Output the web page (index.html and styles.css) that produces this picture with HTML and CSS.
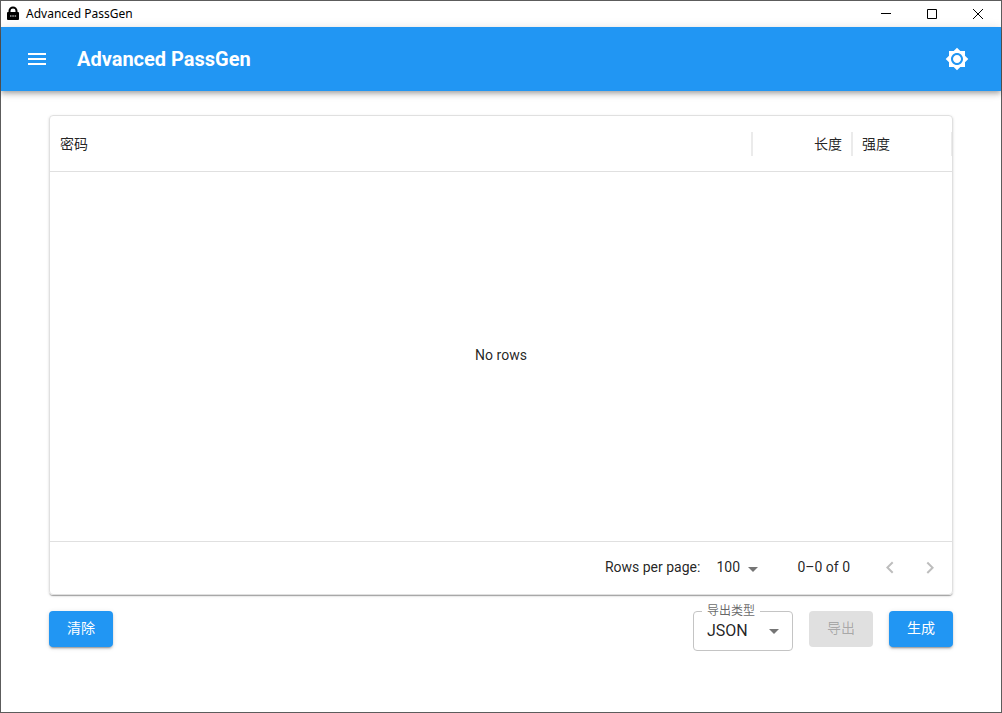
FILE: index.html
```
<!DOCTYPE html>
<html lang="zh-CN">
<head>
  <meta charset="UTF-8">
  <meta name="viewport" content="width=device-width, initial-scale=1.0">
  <title>Advanced PassGen</title>
  <link rel="stylesheet" href="styles.css">
</head>
<body>
  <div class="window">
    <!-- Title bar -->
    <div class="title-bar">
      <svg class="title-icon" viewBox="0 0 16 16" aria-hidden="true">
        <path d="M4.500 7V4.800a3.500 3.300 0 0 1 7 0V7" fill="none" stroke="#000" stroke-width="2"/>
        <rect x="2" y="6" width="12" height="8" rx="1" fill="#000"/>
        <path d="M5 10h1.500M7.300 10h1.500M9.600 10h1.500" stroke="#fff" stroke-width="1"/>
      </svg>
      <span class="title-text">Advanced PassGen</span>
      <div class="window-controls">
        <button type="button" aria-label="Minimize">
          <svg viewBox="0 0 10 10"><path d="M0 4.500h10"/></svg>
        </button>
        <button type="button" aria-label="Maximize">
          <svg viewBox="0 0 10 10"><path d="M.5.5h9v9h-9z"/></svg>
        </button>
        <button type="button" aria-label="Close">
          <svg viewBox="0 0 10 10"><path d="M0 0l10 10M10 0L0 10"/></svg>
        </button>
      </div>
    </div>

    <!-- App bar -->
    <header class="app-bar">
      <button class="icon-button menu" type="button" aria-label="Menu">
        <svg viewBox="0 0 24 24"><path d="M3 18h18v-2H3v2zm0-5h18v-2H3v2zm0-7v2h18V6H3z"/></svg>
      </button>
      <h1>Advanced PassGen</h1>
      <button class="icon-button" type="button" aria-label="Theme">
        <svg viewBox="0 0 24 24"><path d="M20 8.690V4h-4.690L12 .69 8.690 4H4v4.690L.69 12 4 15.310V20h4.690L12 23.310 15.310 20H20v-4.690L23.310 12 20 8.690zM12 18c-3.310 0-6-2.690-6-6s2.690-6 6-6 6 2.690 6 6-2.690 6-6 6zm0-10c-2.210 0-4 1.790-4 4s1.790 4 4 4 4-1.790 4-4-1.790-4-4-4z"/></svg>
      </button>
    </header>

    <main>
      <!-- Password table -->
      <section class="grid">
        <table>
          <thead>
            <tr>
              <th>密码</th>
              <th class="length">长度</th>
              <th class="strength">强度</th>
            </tr>
          </thead>
          <tbody>
            <tr>
              <td colspan="3">No rows</td>
            </tr>
          </tbody>
        </table>
        <div class="pagination">
          <label for="page-size">Rows per page:</label>
          <div class="page-size">
            <select id="page-size">
              <option>100</option>
            </select>
            <svg class="arrow" viewBox="0 0 24 24"><path d="M7 10l5 5 5-5z"/></svg>
          </div>
          <span class="range">0–0 of 0</span>
          <button class="page-button" type="button" aria-label="Previous page" disabled>
            <svg viewBox="0 0 24 24"><path d="M15.410 16.090l-4.580-4.590 4.580-4.590L14 5.500l-6 6 6 6z"/></svg>
          </button>
          <button class="page-button" type="button" aria-label="Next page" disabled>
            <svg viewBox="0 0 24 24"><path d="M8.590 16.340l4.580-4.590-4.580-4.590L10 5.750l6 6-6 6z"/></svg>
          </button>
        </div>
      </section>

      <!-- Actions -->
      <div class="actions">
        <button class="button" type="button">清除</button>
        <div class="export-type">
          <label for="export-type">导出类型</label>
          <select id="export-type">
            <option>JSON</option>
          </select>
          <svg class="arrow" viewBox="0 0 24 24"><path d="M7 10l5 5 5-5z"/></svg>
        </div>
        <button class="button" type="button" disabled>导出</button>
        <button class="button" type="button">生成</button>
      </div>
    </main>
  </div>
</body>
</html>
```
FILE: styles.css
```
* {
  box-sizing: border-box;
}
body {
  margin: 0;
  background-color: #fff;
  color: rgba(0, 0, 0, 0.87);
  font-family: Roboto, "Noto Sans CJK SC", sans-serif;
  font-size: 14px;
  line-height: 20px;
}
button,
select {
  margin: 0;
  border: none;
  background: none;
  color: inherit;
  font: inherit;
}
.window {
  display: flex;
  flex-direction: column;
  min-height: 100vh;
  border: 1px solid #5c5c5c;
}

/* Title bar */
.title-bar {
  display: flex;
  align-items: center;
  height: 26px;
  padding-left: 4px;
  color: #000;
  font-family: "Noto Sans", "Noto Sans CJK SC", sans-serif;
  font-size: 12px;
}
.title-icon {
  width: 16px;
  height: 16px;
  margin-right: 5px;
}
.window-controls {
  display: flex;
  margin-left: auto;
}
.window-controls button {
  display: flex;
  align-items: center;
  justify-content: center;
  width: 46px;
  height: 26px;
  padding: 0;
}
.window-controls svg {
  width: 10px;
  height: 10px;
  fill: none;
  stroke: #000;
  overflow: visible;
}

/* App bar */
.app-bar {
  display: flex;
  align-items: center;
  height: 64px;
  padding: 0 24px;
  background-color: #2196f3;
  color: #fff;
  box-shadow: 0 2px 4px -1px rgba(0, 0, 0, 0.2), 0 4px 5px rgba(0, 0, 0, 0.14), 0 1px 10px rgba(0, 0, 0, 0.12);
}
.app-bar h1 {
  flex: 1;
  margin: 0 0 0 16px;
  font-size: 20px;
  font-weight: 700;
  line-height: 32px;
}
.icon-button {
  display: flex;
  padding: 8px;
}
.menu {
  margin-left: -12px;
  padding: 12px;
}
.icon-button svg,
.page-button svg,
.arrow {
  width: 24px;
  height: 24px;
  fill: currentColor;
}

main {
  display: flex;
  flex: 1;
  flex-direction: column;
  gap: 16px;
  padding: 24px 48px 61px;
}

/* Password table */
.grid {
  display: flex;
  flex: 1;
  flex-direction: column;
  border: 1px solid #e0e0e0;
  border-radius: 4px;
  box-shadow: 0 2px 1px -1px rgba(0, 0, 0, 0.2), 0 1px 1px rgba(0, 0, 0, 0.14), 0 1px 3px rgba(0, 0, 0, 0.12);
}
table {
  flex: 1;
  width: 100%;
  border-collapse: separate;
  border-spacing: 0;
  table-layout: fixed;
}
th {
  position: relative;
  height: 56px;
  padding: 0 10px;
  border-bottom: 1px solid #e0e0e0;
  font-weight: 400;
  text-align: left;
}
th::after {
  content: "";
  position: absolute;
  top: 16px;
  right: -1px;
  width: 2px;
  height: 24px;
  background-color: #ebebeb;
}
th:last-child::after {
  right: 0;
  width: 1px;
}
.length {
  width: 100px;
  text-align: right;
}
.strength {
  width: 100px;
}
td {
  padding: 0 0 4px;
  text-align: center;
}
.pagination {
  display: flex;
  align-items: center;
  justify-content: flex-end;
  height: 53px;
  padding-right: 2px;
  border-top: 1px solid #e0e0e0;
}
.pagination label,
.page-size,
.range {
  padding-bottom: 3px;
}
.page-size {
  position: relative;
  margin: 0 32px 0 8px;
}
.page-size select {
  display: block;
  width: 57px;
  height: 24px;
  padding: 0 24px 0 8px;
  appearance: none;
}
.arrow {
  position: absolute;
  top: 2px;
  right: 0;
  color: rgba(0, 0, 0, 0.54);
  pointer-events: none;
}
.range {
  margin-right: 20px;
}
.page-button {
  display: flex;
  padding: 8px;
  color: rgba(0, 0, 0, 0.26);
}

/* Actions */
.actions {
  display: flex;
  align-items: flex-start;
  gap: 16px;
}
.button {
  min-width: 64px;
  height: 36px;
  padding: 0 16px 2px;
  border-radius: 4px;
  background-color: #2196f3;
  color: #fff;
  box-shadow: 0 3px 1px -2px rgba(0, 0, 0, 0.2), 0 2px 2px rgba(0, 0, 0, 0.14), 0 1px 5px rgba(0, 0, 0, 0.12);
}
.button:disabled {
  background-color: #e0e0e0;
  color: rgba(0, 0, 0, 0.26);
  box-shadow: none;
}
.export-type {
  position: relative;
  margin-left: auto;
}
.export-type label {
  position: absolute;
  top: -8px;
  left: 9px;
  padding: 0 5px;
  background-color: #fff;
  color: rgba(0, 0, 0, 0.6);
  font-size: 12px;
  line-height: 16px;
}
.export-type select {
  display: block;
  width: 100px;
  height: 40px;
  padding: 0 32px 0 13px;
  border: 1px solid #c4c4c4;
  border-radius: 4px;
  font-size: 16px;
  appearance: none;
}
.export-type .arrow {
  top: 8px;
  right: 7px;
}
```
